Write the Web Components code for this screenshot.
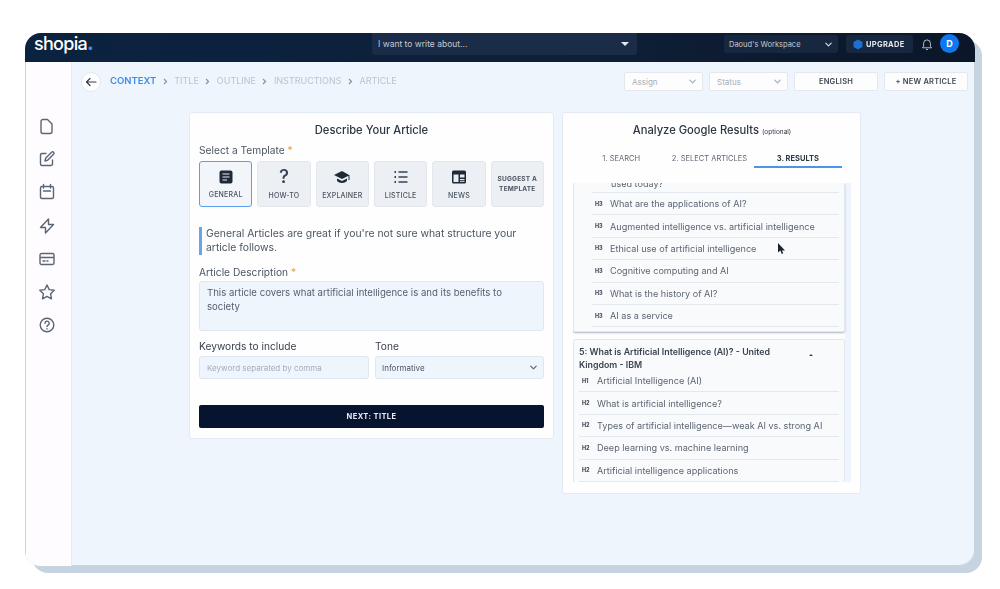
<!DOCTYPE html>
<html lang="en">
<head>
<meta charset="UTF-8">
<title>Shopia</title>
<style>
  html, body { margin: 0; background: #fff; }
  body { padding: 33px 0 0 25px; height: 556px; overflow: hidden; font-family: Inter, "Liberation Sans", sans-serif; }
</style>
</head>
<body>
<sp-window>
  <sp-topbar slot="top"></sp-topbar>
  <sp-rail slot="rail"></sp-rail>
  <sp-steps></sp-steps>
  <sp-cards>
    <sp-describe></sp-describe>
    <sp-analyze>
      <sp-panel inset clipped="used today?">
        <sp-row tag="H3">What are the applications of AI?</sp-row>
        <sp-row tag="H3">Augmented intelligence vs. artificial intelligence</sp-row>
        <sp-row tag="H3">Ethical use of artificial intelligence</sp-row>
        <sp-row tag="H3">Cognitive computing and AI</sp-row>
        <sp-row tag="H3">What is the history of AI?</sp-row>
        <sp-row tag="H3">AI as a service</sp-row>
      </sp-panel>
      <sp-panel heading="5: What is Artificial Intelligence (AI)? - United Kingdom - IBM">
        <sp-row tag="H1">Artificial Intelligence (AI)</sp-row>
        <sp-row tag="H2">What is artificial intelligence?</sp-row>
        <sp-row tag="H2">Types of artificial intelligence—weak AI vs. strong AI</sp-row>
        <sp-row tag="H2">Deep learning vs. machine learning</sp-row>
        <sp-row tag="H2">Artificial intelligence applications</sp-row>
      </sp-panel>
    </sp-analyze>
  </sp-cards>
</sp-window>

<script>
  const chevron = (c, s = 9) => `<svg width="${s}" height="${s}" viewBox="0 0 10 10" fill="none" stroke="${c}" stroke-width="1.3" stroke-linecap="round" stroke-linejoin="round"><path d="M2 3.5 5 6.5 8 3.5"/></svg>`;

  // small helper so every element gets an open shadow root with its own style
  function define(name, css, html) {
    customElements.define(name, class extends HTMLElement {
      constructor() {
        super();
        this.attachShadow({ mode: 'open' });
      }
      connectedCallback() {
        const body = typeof html === 'function' ? html(this) : html;
        this.shadowRoot.innerHTML = `<style>${css}</style>${body}`;
      }
    });
  }

  define('sp-window', `
    :host { display: grid; grid-template: 29px 504px / 47px 903px; width: 950px; height: 533px; border-radius: 16px;
            box-shadow: 7px 7px 0 #c6d3e0, inset 0 0 0 1px #c6d3e0; background: #eff5fd; overflow: hidden; filter: blur(.55px); }
    .top { grid-column: 1 / 3; }
    main { padding: 10px 7px 0 8px; position: relative; min-width: 0; }
    .cursor { position: absolute; left: 705px; top: 180px; }
  `, `
    <div class="top"><slot name="top"></slot></div>
    <slot name="rail"></slot>
    <main><slot></slot>
      <svg class="cursor" width="9" height="13" viewBox="0 0 9 13"><path d="M1 1v9.5l2.3-2 1.5 3.5 1.5-.7L4.900 8.400H8z" fill="#1c2430"/></svg>
    </main>
  `);

  define('sp-topbar', `
    :host { display: flex; align-items: flex-start; height: 29px; background: linear-gradient(90deg, #0b2240, #0e2039 55%, #0b1628); color: #fff; }
    .logo { width: 347px; padding: 0 0 0 9px; box-sizing: border-box; font-size: 18px; font-weight: 500; letter-spacing: -.7px; line-height: 21px; }
    .logo i { color: #3a8ff5; font-style: normal; font-weight: 900; }
    .search { width: 265px; height: 22px; background: #1a2c47; border-radius: 0 0 3px 3px; display: flex; align-items: center; justify-content: space-between; padding: 0 8px 0 6px; box-sizing: border-box; font-size: 8.500px; color: #c3cad4; }
    .search b { width: 0; height: 0; border: 4px solid transparent; border-top: 4px solid #e6eaf0; border-bottom: 0; }
    .ws { margin: 2px 0 0 87px; width: 114px; height: 18px; background: #16273f; border-radius: 3px; display: flex; align-items: center; justify-content: space-between; padding: 0 5px; box-sizing: border-box; font-size: 7.500px; color: #c3cad4; }
    .up { margin: 2px 0 0 8px; width: 67px; height: 18px; background: #16273f; border-radius: 3px; display: flex; align-items: center; gap: 3px; padding-left: 7px; box-sizing: border-box; font-size: 7.500px; font-weight: 700; letter-spacing: .3px; color: #e4e8ee; }
    .bell { margin: 5px 0 0 8px; }
    .av { margin: 1px 0 0 7px; width: 19px; height: 19px; border-radius: 50%; background: #0d78f2; font-size: 9px; font-weight: 700; display: flex; align-items: center; justify-content: center; }
  `, `
    <div class="logo">shopia<i>.</i></div>
    <div class="search"><span>I want to write about...</span><b></b></div>
    <div class="ws"><span>Daoud's Workspace</span>${chevron('#d5dae2')}</div>
    <div class="up"><svg width="10" height="11" viewBox="0 0 10 11"><path d="M5 .5 9.500 3v5L5 10.500.5 8V3z" fill="#1f6fd0"/></svg>UPGRADE</div>
    <svg class="bell" width="12" height="13" viewBox="0 0 12 13" fill="none" stroke="#c9ced6" stroke-width=".9"><path d="M1.500 9.800h9L9.400 8.300V5.300a3.400 3.400 0 0 0-6.800 0v3zM5 11.500h2"/></svg>
    <div class="av">D</div>
  `);

  const railIcons = [
    '<path d="M6 3.500h4.500L15 8v7.500a2 2 0 0 1-2 2H6a2 2 0 0 1-2-2v-10a2 2 0 0 1 2-2z"/>',
    '<path d="M9 4.500H5A1.500 1.500 0 0 0 3.500 6v9A1.500 1.500 0 0 0 5 16.500h9a1.500 1.500 0 0 0 1.500-1.500v-4M8 12l.6-2.700 6-6a1.300 1.300 0 0 1 2 2l-6 6z"/>',
    '<path d="M5 4.500h10A1.500 1.500 0 0 1 16.500 6v9a1.500 1.500 0 0 1-1.500 1.500H5A1.500 1.500 0 0 1 3.500 15V6A1.500 1.500 0 0 1 5 4.500zM6.500 2.500v3.500M13.500 2.500v3.500M6.500 9h7"/>',
    '<path d="M11.500 3v5.500h5L8.500 17v-5.500h-5z"/>',
    '<path d="M4.500 4.500h11A1.500 1.500 0 0 1 17 6v8a1.500 1.500 0 0 1-1.500 1.500h-11A1.500 1.500 0 0 1 3 14V6a1.500 1.500 0 0 1 1.500-1.500zM3 8.500h14M6 12h2M10 12h1"/>',
    '<path d="m10 3 2.200 4.600 5 .7-3.600 3.500.9 5L10 14.400l-4.500 2.400.9-5L2.800 8.300l5-.7z"/>',
    '<circle cx="10" cy="10" r="6.800"/><path d="M8 8.200a2.100 2.100 0 1 1 3 1.900c-.7.4-1 .8-1 1.500M10 13.700v.3"/>'
  ];
  define('sp-rail', `
    :host { display: flex; flex-direction: column; align-items: center; gap: 13.200px; padding: 54px 2px 0 0; width: 47px; box-sizing: border-box; background: #fefcff; border-right: 1px solid #e6ebf2; box-shadow: inset 1px 0 0 #c6d3e0; }
    svg { display: block; }
  `, railIcons.map(p => `<svg width="20" height="20" viewBox="0 0 20 20" fill="none" stroke="#5c6573" stroke-width="1.400" stroke-linecap="round" stroke-linejoin="round">${p}</svg>`).join(''));

  define('sp-steps', `
    :host { display: flex; align-items: center; height: 19px; font-size: 9px; color: #bcc3cc; }
    .back { width: 20px; height: 20px; border-radius: 50%; background: #fff; border: 1px solid #e1e6ed; box-sizing: border-box; display: flex; align-items: center; justify-content: center; margin: 0 9px 0 1px; }
    .t { position: relative; top: -1px; }
    .on { color: #3f8ce8; font-weight: 600; font-size: 9.500px; }
    .sep { margin: 0 6.500px; width: 5px; display: flex; }
    .right { margin-left: auto; display: flex; gap: 6px; }
    .box { height: 19px; width: 79px; box-sizing: border-box; background: #fdfdfe; border: 1px solid #e3e8ef; border-radius: 2px; display: flex; align-items: center; justify-content: space-between; padding: 0 5px 0 7px; font-size: 8px; color: #a5adb8; }
    .btn { width: 84px; justify-content: center; color: #3d4653; font-weight: 600; font-size: 7.500px; letter-spacing: .2px; padding: 0; }
  `, () => {
    const sep = `<span class="sep"><svg width="5" height="7" viewBox="0 0 5 7" fill="none" stroke="#8b929c" stroke-width="1.200"><path d="m1 1 2.500 2.500L1 6"/></svg></span>`;
    return `
    <div class="back"><svg width="12" height="10" viewBox="0 0 12 10" fill="none" stroke="#333c48" stroke-width="1.200" stroke-linecap="round" stroke-linejoin="round"><path d="M11 5H1.500M5 1.500 1.500 5 5 8.500"/></svg></div>
    <span class="t on">CONTEXT</span>${sep}<span class="t">TITLE</span>${sep}<span class="t">OUTLINE</span>${sep}<span class="t">INSTRUCTIONS</span>${sep}<span class="t">ARTICLE</span>
    <div class="right">
      <div class="box"><span>Assign</span>${chevron('#a5adb8')}</div>
      <div class="box"><span>Status</span>${chevron('#a5adb8')}</div>
      <div class="box btn">ENGLISH</div>
      <div class="box btn">+ NEW ARTICLE</div>
    </div>`;
  });

  define('sp-cards', `
    :host { display: grid; grid-template-columns: 365px 299px; column-gap: 8px; align-items: start; margin: 21px 0 0 109px; }
  `, `<slot></slot>`);

  const cardCss = `box-sizing: border-box; background: #fefefe; border: 1px solid #e4eaf1; border-radius: 3px;`;

  const tplIcons = {
    general: `<svg width="16" height="16" viewBox="0 0 16 16"><rect x="1.500" y="1.500" width="13" height="13" rx="2" fill="#1f2937"/><path d="M4.500 5h7M4.500 8h7M4.500 11h4.500" stroke="#e9edf2" stroke-width="1.200"/></svg>`,
    how: `<span style="font-size:19px;font-weight:500;line-height:16px;color:#374151">?</span>`,
    explainer: `<svg width="18" height="16" viewBox="0 0 18 16" fill="#1f2937"><path d="M9 2 1 6l8 4 6.500-3.200V11h1V6.200z"/><path d="M4 9.500V12c1.300 1.300 3 2 5 2s3.700-.7 5-2V9.500L9 12z"/></svg>`,
    list: `<svg width="16" height="16" viewBox="0 0 16 16" fill="none" stroke="#374151" stroke-width="1.300"><path d="M5.500 3h9M5.500 8h9M5.500 13h9"/><path d="M1.500 3h1.500M1.500 8h1.500M1.500 13h1.500" stroke-width="2"/></svg>`,
    news: `<svg width="16" height="16" viewBox="0 0 16 16"><rect x="1" y="1.500" width="14" height="13" rx="1.500" fill="#1f2937"/><rect x="2.500" y="5.500" width="5" height="7.500" fill="#e9edf2"/><rect x="9" y="5.500" width="4.500" height="3" fill="#e9edf2"/><path d="M9 10.500h4.500M9 12.300h4.500" stroke="#e9edf2"/></svg>`
  };

  define('sp-tpl', `
    :host { display: flex; flex-direction: column; align-items: center; box-sizing: border-box; height: 46px; background: #ecf0f4; border: 1px solid #e2e7ed; border-radius: 3px; padding-top: 7px; gap: 6px; font-size: 7px; font-weight: 500; letter-spacing: .2px; color: #4a5361; }
    :host([on]) { background: #f2f6fb; border: 1.500px solid #5d9fef; gap: 5px; }
    :host([plain]) { justify-content: center; padding: 0; gap: 0; text-align: center; font-size: 6.500px; font-weight: 700; line-height: 10px; }
    .i { height: 16px; display: flex; align-items: center; }
  `, el => el.hasAttribute('plain') ? `<slot></slot>` : `<div class="i">${tplIcons[el.getAttribute('icon')]}</div><slot></slot>`);

  define('sp-describe', `
    :host { display: block; ${cardCss} padding: 8px 9px 10px; color: #39424f; }
    h2 { margin: 0; font-size: 11.200px; line-height: 18px; font-weight: 500; text-align: center; color: #2d3643; }
    label, .lab { display: block; font-size: 10.200px; line-height: 14px; color: #4d5664; }
    label i { color: #f0a040; font-style: normal; }
    .tpls { display: grid; grid-template-columns: repeat(6, 1fr); gap: 5px; margin-top: 4px; }
    .note { margin-top: 20px; border-left: 3px solid #6aa3ea; padding-left: 4px; height: 28px; font-size: 10.400px; line-height: 14px; color: #4d5664; }
    .ta { margin-top: 2px; height: 50px; box-sizing: border-box; background: #eff5fd; border: 1px solid #dfe7f0; border-radius: 3px; padding: 4px 30px 4px 7px; font-size: 9.600px; line-height: 13.500px; color: #566070; }
    .two { display: grid; grid-template-columns: 170px 169px; column-gap: 6px; margin-top: 8px; }
    .two .lab { color: #39424f; }
    .in { margin-top: 3px; height: 23px; box-sizing: border-box; background: #eff5fd; border: 1px solid #dfe7f0; border-radius: 3px; display: flex; align-items: center; justify-content: space-between; padding: 0 5px 0 7px; font-size: 8px; color: #a4adb9; }
    .sel { color: #4d5664; padding-left: 6px; }
    .go { margin-top: 26px; height: 23px; background: #061430; border-radius: 2px; color: #e8ebf0; display: flex; align-items: center; justify-content: center; font-size: 7.500px; font-weight: 700; letter-spacing: .4px; }
  `, `
    <h2>Describe Your Article</h2>
    <label style="margin-top:4px">Select a Template <i>*</i></label>
    <div class="tpls">
      <sp-tpl on icon="general">GENERAL</sp-tpl>
      <sp-tpl icon="how">HOW-TO</sp-tpl>
      <sp-tpl icon="explainer">EXPLAINER</sp-tpl>
      <sp-tpl icon="list">LISTICLE</sp-tpl>
      <sp-tpl icon="news">NEWS</sp-tpl>
      <sp-tpl plain>SUGGEST A<br>TEMPLATE</sp-tpl>
    </div>
    <div class="note">General Articles are great if you're not sure what structure your article follows.</div>
    <label style="margin-top:10px">Article Description <i>*</i></label>
    <div class="ta">This article covers what artificial intelligence is and its benefits to society</div>
    <div class="two">
      <div><span class="lab">Keywords to include</span><div class="in">Keyword separated by comma</div></div>
      <div><span class="lab">Tone</span><div class="in sel"><span>Informative</span>${chevron('#5c6573')}</div></div>
    </div>
    <div class="go">NEXT: TITLE</div>
  `);

  define('sp-analyze', `
    :host { display: block; ${cardCss} padding: 8px 9px 11px 10px; color: #39424f; }
    h2 { margin: 0; font-size: 11.200px; line-height: 18px; font-weight: 500; text-align: center; color: #2d3643; }
    h2 small { font-size: 6.500px; font-weight: 400; }
    .tabs { display: grid; grid-template-columns: repeat(3, 1fr); margin: 10px 9px 0 4px; font-size: 7.500px; color: #5d6674; text-align: center; }
    .tabs span { height: 17px; line-height: 15px; border-bottom: 2px solid transparent; box-sizing: border-box; }
    .tabs .on { color: #2f3946; font-weight: 700; border-bottom-color: #4c93ea; }
    .scroll { margin-top: 15px; height: 299px; overflow: hidden; display: flex; flex-direction: column; gap: 7px; background: linear-gradient(90deg, transparent 272px, #eff5fd 272px, #eff5fd 278px, transparent 278px); }
  `, `
    <h2>Analyze Google Results <small>(optional)</small></h2>
    <div class="tabs"><span>1. SEARCH</span><span>2. SELECT ARTICLES</span><span class="on">3. RESULTS</span></div>
    <div class="scroll"><slot></slot></div>
  `);

  define('sp-panel', `
    :host { display: block; flex: none; width: 272px; box-sizing: border-box; background: #f8fafc; border: 1px solid #e3e8ee; border-radius: 2px; padding: 0 5px; }
    :host([inset]) { border-top: 0; height: 149px; box-shadow: 0 1px 2px #aab6c4; padding: 0 5px 0 18px; }
    .cut { height: 9px; overflow: hidden; display: flex; align-items: flex-end; padding-left: 19px; font-size: 9.100px; line-height: 13px; color: #5d6674; border-bottom: 1px solid #e3e8ee; }
    .cut span { position: relative; top: -2px; }
    .head { display: flex; align-items: flex-start; padding: 5px 0 0 0; font-size: 8.800px; line-height: 13px; font-weight: 600; color: #3b4451; height: 29px; box-sizing: border-box; margin-bottom: 1px; }
    .head span { width: 200px; }
    .head b { margin: 9px 0 0 30px; width: 0; height: 0; border: 2px solid transparent; border-bottom: 2px solid #3b4451; border-top: 0; }
  `, el => {
    const clipped = el.getAttribute('clipped');
    const heading = el.getAttribute('heading');
    return (clipped ? `<div class="cut"><span>${clipped}</span></div>` : '') +
      (heading ? `<div class="head"><span>${heading}</span><b></b></div>` : '') + `<slot></slot>`;
  });

  define('sp-row', `
    :host { display: flex; align-items: center; height: 22.400px; box-sizing: border-box; border-bottom: 1px solid #e3e8ee; padding-left: 3px; font-size: 9.100px; color: #5d6674; white-space: nowrap; }
    b { width: 15px; flex: none; font-size: 5.500px; font-weight: 800; color: #4a5361; }
  `, el => `<b>${el.getAttribute('tag')}</b><slot></slot>`);
</script>
</body>
</html>
